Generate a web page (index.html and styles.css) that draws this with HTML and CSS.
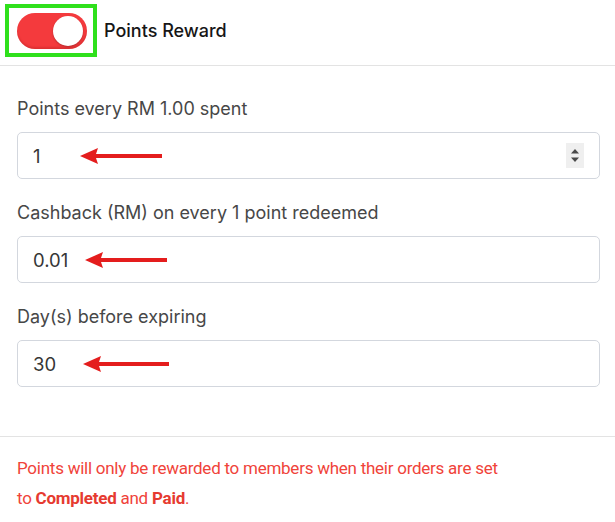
FILE: index.html
```html
<!DOCTYPE html>
<html lang="en">
<head>
<meta charset="utf-8">
<title>Points Reward</title>
<link rel="stylesheet" href="styles.css">
</head>
<body>
<header class="header">
  <div class="highlight">
    <div class="toggle"><span class="knob"></span></div>
  </div>
  <h1 class="title">Points Reward</h1>
</header>

<main class="form">
  <div class="group">
    <label class="label">Points every RM 1.00 spent</label>
    <div class="field">
      <span class="value">1</span>
      <svg class="arrow arrow-1" width="82" height="16" viewBox="0 0 82 16"><polygon points="0,8 18,0 16,6 82,6 82,10 16,10 18,16" fill="#e41d1d"/></svg>
      <span class="spinner">
        <svg width="18" height="25" viewBox="0 0 18 25"><polygon points="9,6 13,10.5 5,10.5" fill="#4a4a4a"/><polygon points="5,14.5 13,14.5 9,19" fill="#4a4a4a"/></svg>
      </span>
    </div>
  </div>

  <div class="group">
    <label class="label">Cashback (RM) on every 1 point redeemed</label>
    <div class="field">
      <span class="value">0.01</span>
      <svg class="arrow arrow-2" width="82" height="16" viewBox="0 0 82 16"><polygon points="0,8 18,0 16,6 82,6 82,10 16,10 18,16" fill="#e41d1d"/></svg>
    </div>
  </div>

  <div class="group">
    <label class="label">Day(s) before expiring</label>
    <div class="field">
      <span class="value">30</span>
      <svg class="arrow arrow-3" width="86" height="16" viewBox="0 0 86 16"><polygon points="0,8 18,0 16,6 86,6 86,10 16,10 18,16" fill="#e41d1d"/></svg>
    </div>
  </div>
</main>

<footer class="note">
  <p>Points will only be rewarded to members when their orders are set to <strong>Completed</strong> and <strong>Paid</strong>.</p>
</footer>
</body>
</html>
```

FILE: styles.css
```css
* { box-sizing: border-box; }

html, body {
  margin: 0;
  padding: 0;
  background: #ffffff;
}

body {
  font-family: Inter, "Noto Sans", sans-serif;
  width: 615px;
  height: 522px;
  overflow: hidden;
}

.header {
  display: flex;
  align-items: center;
  height: 66px;
  padding: 0 0 5px 5px;
  border-bottom: 1px solid #e3e3e3;
}

.highlight {
  width: 92px;
  height: 53px;
  border: 4px solid #2fe01c;
  padding: 5px 0 0 8px;
}

.toggle {
  position: relative;
  width: 70px;
  height: 36px;
  border-radius: 18px;
  background: #f43a3d;
  box-shadow: inset 0 -2px 2px rgba(120, 0, 0, 0.18);
}

.knob {
  position: absolute;
  top: 3px;
  right: 4px;
  width: 30px;
  height: 30px;
  border-radius: 50%;
  background: #ffffff;
  box-shadow: 0 1px 2px rgba(0, 0, 0, 0.25);
}

.title {
  margin: 0 0 0 7px;
  font-size: 18px;
  font-weight: 500;
  color: #161616;
}

.form {
  padding: 31px 15px 49px 17px;
}

.group {
  display: flex;
  flex-direction: column;
  margin-bottom: 22px;
}

.group:last-child {
  margin-bottom: 0;
}

.label {
  font-size: 18px;
  line-height: 24px;
  color: #474747;
}

.field {
  position: relative;
  display: flex;
  align-items: center;
  justify-content: space-between;
  margin-top: 11px;
  height: 47px;
  padding: 0 15px 0 15px;
  border: 1px solid #d3d7de;
  border-radius: 5px;
  background: #fff;
}

.value {
  font-size: 18.5px;
  color: #363636;
}

.arrow {
  position: absolute;
  top: 50%;
  transform: translateY(-50%);
}

.arrow-1 { left: 62px; }
.arrow-2 { left: 67px; }
.arrow-3 { left: 65px; }

.spinner {
  display: block;
  width: 18px;
  height: 25px;
  background: #efefef;
}

.spinner svg { display: block; }

.note {
  border-top: 1px solid #e3e3e3;
  padding: 16px 100px 0 17px;
}

.note p {
  margin: 0;
  font-family: Roboto, "Liberation Sans", sans-serif;
  font-size: 17px;
  letter-spacing: -0.25px;
  line-height: 30px;
  color: #f0433a;
}

.note strong {
  font-weight: 700;
  color: #e63a30;
}
```
